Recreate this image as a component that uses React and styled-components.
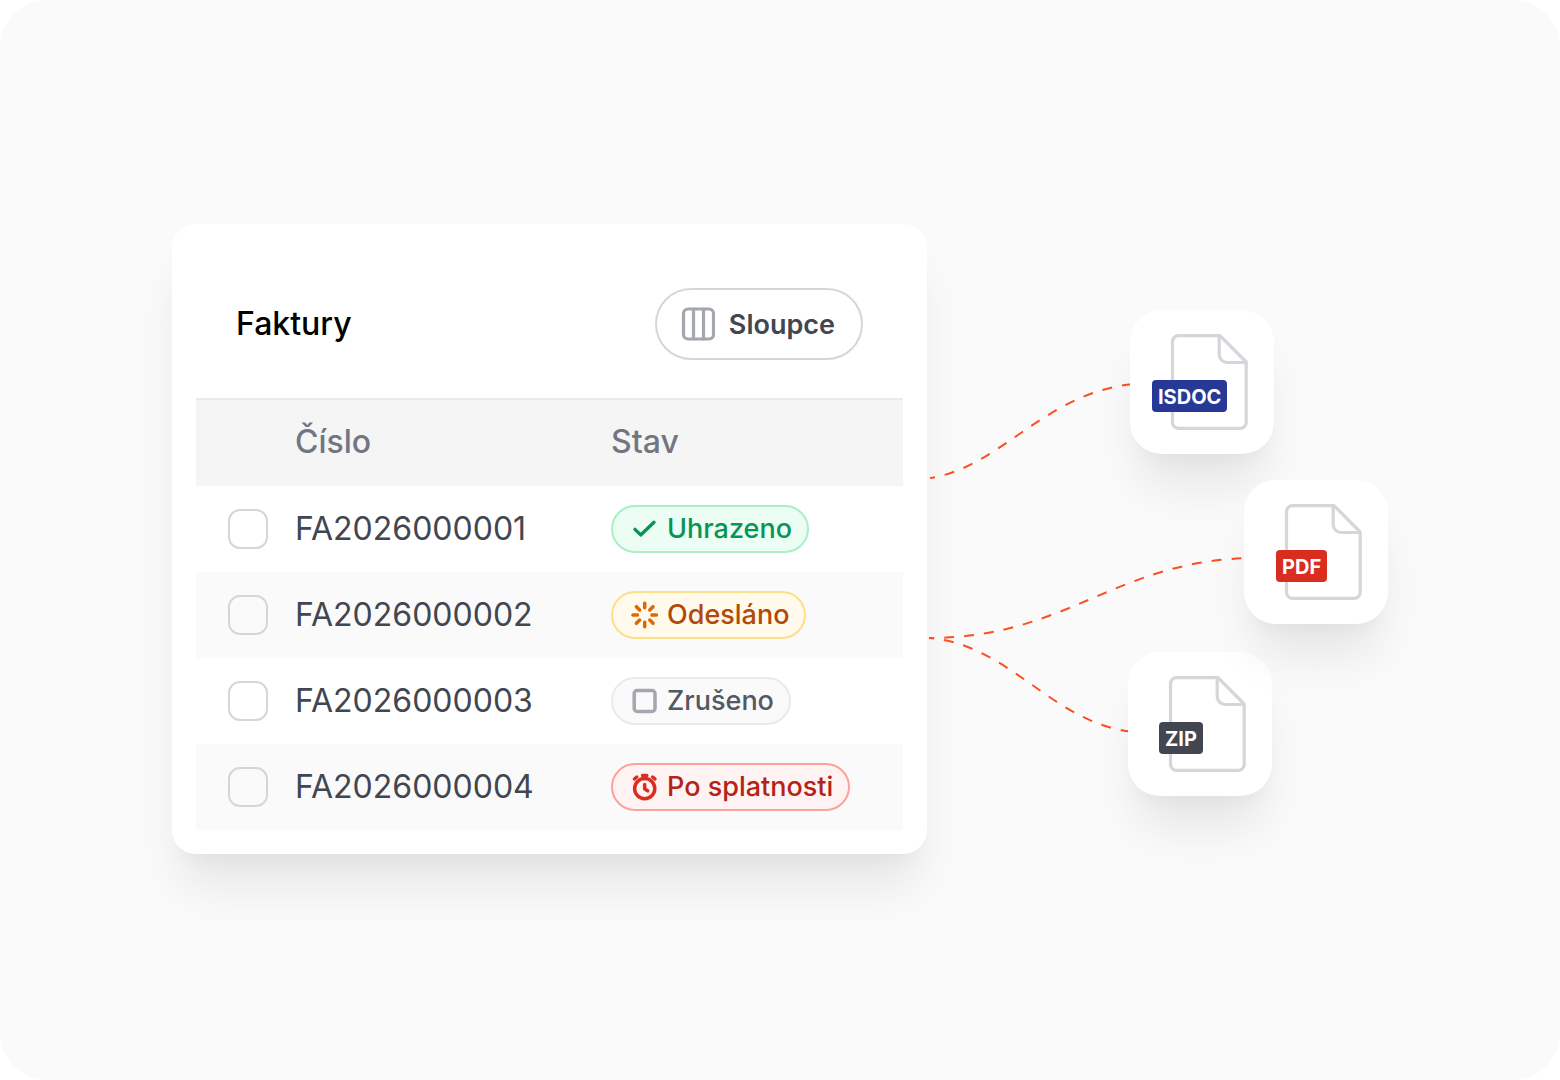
import React from "react";
import styled, { createGlobalStyle, ThemeProvider } from "styled-components";

const theme = {
  font: '"Inter", "Liberation Sans", sans-serif',
  shadow: "0 40px 48px -8px #0a0d1214, 0 16px 16px -8px #0a0d1208",
  colors: {
    page: "#fafafa",
    line: "#d5d6da",
    text: "#414651",
    muted: "#717680",
    icon: "#a4a7ae",
    accent: "#fb4f22",
  },
};

const tones = {
  success: { text: "#079455", icon: "#079455", fill: "#ecfdf3", line: "#abefc6" },
  warning: { text: "#b54708", icon: "#dc6803", fill: "#fffaeb", line: "#fedf89" },
  neutral: { text: "#535862", icon: "#a4a7ae", fill: "#fafafa", line: "#e9eaeb" },
  error: { text: "#b42318", icon: "#d92d20", fill: "#fef3f2", line: "#fda29b" },
};

const GlobalStyle = createGlobalStyle`
  *, *::before, *::after {
    box-sizing: border-box;
  }

  body {
    margin: 0;
    background: #fff;
    font-family: ${theme.font};
    -webkit-font-smoothing: antialiased;
  }
`;

const Stage = styled.main`
  display: flex;
  align-items: flex-start;

  min-height: 100vh;
  padding: 224px 172px;
  border-radius: 48px;

  background: ${props => props.theme.colors.page};
`;

const Card = styled.section`
  flex: 1;

  padding: 24px;
  border-radius: 24px;
  box-shadow: ${props => props.theme.shadow};

  background: #fff;
`;

const CardHeader = styled.header`
  display: flex;
  align-items: center;
  justify-content: space-between;

  padding: 40px 40px 38px;
`;

const Title = styled.h2`
  margin: 0;

  font-size: 32px;
  font-weight: 500;
  line-height: 48px;
  color: #000;
`;

const Button = styled.button`
  display: flex;
  align-items: center;
  gap: 14px;

  height: 72px;
  padding: 0 26px 0 24px;
  border: 2px solid ${props => props.theme.colors.line};
  border-radius: 36px;

  background: #fff;

  font-family: inherit;
  font-size: 27px;
  font-weight: 600;
  color: ${props => props.theme.colors.text};

  svg {
    color: ${props => props.theme.colors.icon};
  }
`;

const Table = styled.table`
  width: 100%;
  border-collapse: collapse;
  table-layout: fixed;

  text-align: left;
`;

const Column = styled.col`
  width: ${props => props.$width};
`;

const HeadRow = styled.tr`
  height: 88px;
  box-shadow: inset 0 2px #e9eaeb;

  background: #f5f5f5;
`;

const HeadCell = styled.th`
  padding: 0;

  font-size: 32px;
  font-weight: 500;
  line-height: 40px;
  color: ${props => props.theme.colors.muted};
`;

const Row = styled.tr`
  height: 86px;

  &:nth-child(even) {
    background: ${props => props.theme.colors.page};
  }
`;

const Cell = styled.td`
  padding: 0;

  font-size: 32px;
  line-height: 40px;
  color: ${props => props.theme.colors.text};
`;

const CheckCell = styled(Cell)`
  padding-left: 32px;
`;

const Checkbox = styled.input`
  display: block;
  appearance: none;

  width: 40px;
  height: 40px;
  margin: 0;
  border: 2px solid ${props => props.theme.colors.line};
  border-radius: 12px;

  &:checked {
    background: ${props => props.theme.colors.accent};
  }
`;

const Status = styled.span`
  display: flex;
  align-items: center;
  gap: 6px;

  width: fit-content;
  height: 48px;
  padding: 0 15px 0 16px;
  border: 2px solid ${props => tones[props.$tone].line};
  border-radius: 24px;

  background: ${props => tones[props.$tone].fill};

  font-size: 27px;
  font-weight: 500;
  line-height: 40px;
  white-space: nowrap;
  color: ${props => tones[props.$tone].text};

  svg {
    flex: none;
    color: ${props => tones[props.$tone].icon};
  }
`;

const Diagram = styled.div`
  position: relative;
  flex: none;

  width: 461px;
  height: 630px;
`;

const Connectors = styled.svg`
  display: block;
`;

const FileTile = styled.div`
  position: absolute;
  top: ${props => props.$top}px;
  left: ${props => props.$left}px;
  z-index: ${props => props.$layer};

  padding: 24px;
  border-radius: 32px;
  box-shadow: ${props => props.theme.shadow};

  background: #fff;

  svg {
    display: block;
  }
`;

const FileType = styled.span`
  position: absolute;
  top: 70px;
  left: ${props => props.$left}px;

  padding: 2px 6px 0;
  border-radius: 4px;

  background: ${props => props.$color};

  font-size: 20px;
  font-weight: 700;
  line-height: 30px;
  color: #fff;
`;

const Icon = ({ size = 32, stroke = 3, children }) => (
  <svg
    width={size}
    height={size}
    viewBox={`0 0 ${size} ${size}`}
    fill="none"
    stroke="currentColor"
    strokeWidth={stroke}
    strokeLinecap="round"
    strokeLinejoin="round"
    aria-hidden="true"
  >
    {children}
  </svg>
);

const ColumnsIcon = () => (
  <Icon size={34} stroke={3.2}>
    <rect x="2.5" y="2" width="30" height="30" rx="4.5" />
    <path d="M12.5 2v30M22.5 2v30" />
  </Icon>
);

const CheckIcon = () => (
  <Icon stroke={3.4}>
    <path d="M6 16.4l5.7 5.5L25 9.2" />
  </Icon>
);

const SpinnerIcon = () => (
  <Icon stroke={3.5}>
    <path d="M15.7 4.2v4.6M15.7 23.2v4.6M3.9 16h4.6M22.9 16h4.6M7.4 7.7l3.2 3.2M20.8 21.1l3.2 3.2M7.4 24.3l3.2-3.2M20.8 10.9l3.2-3.2" />
  </Icon>
);

const SquareIcon = () => (
  <Icon stroke={3.5}>
    <rect x="5.2" y="5.6" width="20.8" height="20.8" rx="3" />
  </Icon>
);

const AlarmIcon = () => (
  <Icon stroke={3.5}>
    <circle cx="15.7" cy="17.6" r="10.1" />
    <path d="M13.6 4.6h4.2M15.7 4.6v3M5.4 8l2.4-2M26 8l-2.4-2M15.7 13.4v4.6l3 1.8" />
  </Icon>
);

const DocumentIcon = () => (
  <svg width="96" height="96" viewBox="0 0 96 96" fill="none" stroke={theme.colors.line} strokeWidth="3.2" strokeLinejoin="round" aria-hidden="true">
    <path d="M24.5 1.6H66L92.2 28V88.4a6 6 0 0 1-6 6H24.5a6 6 0 0 1-6-6V7.6a6 6 0 0 1 6-6z" />
    <path d="M65.2 1.6V20.5a8 8 0 0 0 8 8H92" />
  </svg>
);

const invoices = [
  { number: "FA2026000001", status: "Uhrazeno", tone: "success", icon: <CheckIcon /> },
  { number: "FA2026000002", status: "Odesláno", tone: "warning", icon: <SpinnerIcon /> },
  { number: "FA2026000003", status: "Zrušeno", tone: "neutral", icon: <SquareIcon /> },
  { number: "FA2026000004", status: "Po splatnosti", tone: "error", icon: <AlarmIcon /> },
];

const files = [
  { type: "ISDOC", color: "#273897", top: 86, left: 203, labelLeft: 22, layer: 1 },
  // sits above its neighbours, so its shadow falls on the archive tile
  { type: "PDF", color: "#d92d20", top: 256, left: 317, labelLeft: 32, layer: 2 },
  { type: "ZIP", color: "#414651", top: 428, left: 201, labelLeft: 31, layer: 1 },
];

const App = () => (
  <ThemeProvider theme={theme}>
    <GlobalStyle />
    <Stage>
      <Card>
        <CardHeader>
          <Title>Faktury</Title>
          <Button type="button">
            <ColumnsIcon />
            Sloupce
          </Button>
        </CardHeader>
        <Table>
          <colgroup>
            <Column $width="99px" />
            <Column $width="316px" />
            <Column $width="auto" />
          </colgroup>
          <thead>
            <HeadRow>
              <HeadCell />
              <HeadCell scope="col">Číslo</HeadCell>
              <HeadCell scope="col">Stav</HeadCell>
            </HeadRow>
          </thead>
          <tbody>
            {invoices.map(({ number, status, tone, icon }) => (
              <Row key={number}>
                <CheckCell>
                  <Checkbox type="checkbox" aria-labelledby={number} />
                </CheckCell>
                <Cell id={number}>{number}</Cell>
                <Cell>
                  <Status $tone={tone}>
                    {icon}
                    {status}
                  </Status>
                </Cell>
              </Row>
            ))}
          </tbody>
        </Table>
      </Card>
      <Diagram>
        <Connectors
          width="461"
          height="630"
          viewBox="0 0 461 630"
          fill="none"
          stroke={theme.colors.accent}
          strokeWidth="2"
          strokeDasharray="10 10"
          strokeDashoffset="5"
          aria-hidden="true"
        >
          <path d="M3 254C73 244 118 168 207 160" />
          <path d="M2 414C142 414 190 334 330 334" />
          <path d="M2 414C83 420 125 500 207 508" />
        </Connectors>
        {files.map(({ type, color, top, left, labelLeft, layer }) => (
          <FileTile key={type} $top={top} $left={left} $layer={layer}>
            <DocumentIcon />
            <FileType $color={color} $left={labelLeft}>
              {type}
            </FileType>
          </FileTile>
        ))}
      </Diagram>
    </Stage>
  </ThemeProvider>
);

export default App;
